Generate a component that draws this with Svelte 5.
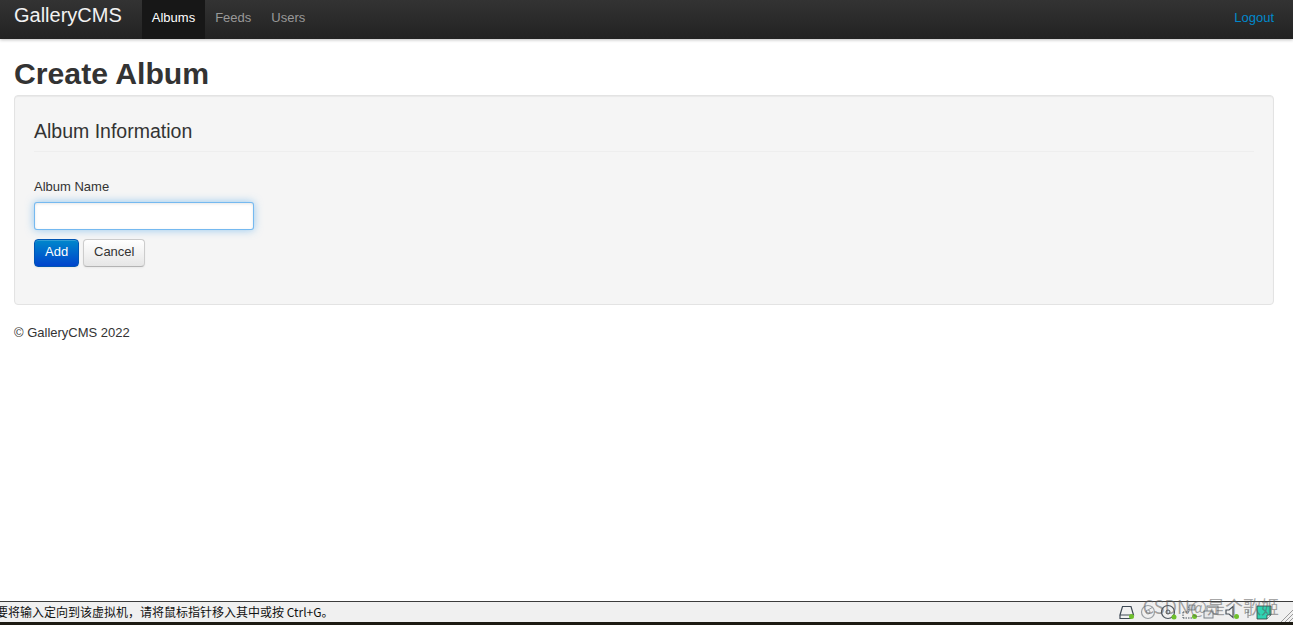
<script>
  let albumName = $state('')
  const navItems = [
    { label: 'Albums', active: true },
    { label: 'Feeds', active: false },
    { label: 'Users', active: false }
  ]
</script>

<div class="page">
  <header class="navbar">
    <a class="brand" href="#top">GalleryCMS</a>
    <nav class="nav">
      {#each navItems as item}
        <a class="nav-link" class:active={item.active} href="#top">{item.label}</a>
      {/each}
    </nav>
    <a class="logout" href="#top">Logout</a>
  </header>

  <main class="container">
    <h1>Create Album</h1>
    <form class="well" onsubmit={(e) => e.preventDefault()}>
      <fieldset>
        <legend>Album Information</legend>
        <label for="album-name">Album Name</label>
        <input id="album-name" type="text" bind:value={albumName} />
        <div class="actions">
          <button class="btn primary" type="submit">Add</button>
          <button class="btn" type="button">Cancel</button>
        </div>
      </fieldset>
    </form>
    <footer>© GalleryCMS 2022</footer>
  </main>

  <div class="vm-bar">
    <div class="hint">要将输入定向到该虚拟机，请将鼠标指针移入其中或按 Ctrl+G。</div>
    <div class="tray">
      <svg width="16" height="16" viewBox="0 0 16 16"><path d="M1 11 L3.5 2.5 H12 L14.5 11 Z M1 11 V14.5 H12" fill="none" stroke="#3f4a55" stroke-width="1.2"/><circle cx="12.5" cy="12.5" r="2.5" fill="#6fc02c"/></svg>
      <svg width="16" height="16" viewBox="0 0 16 16"><circle cx="8" cy="8" r="6.5" fill="none" stroke="#9a9fa3" stroke-width="1.2"/><circle cx="8" cy="8" r="2" fill="none" stroke="#9a9fa3"/><path d="M8 6 L13 3" stroke="#9a9fa3"/></svg>
      <svg width="16" height="16" viewBox="0 0 16 16"><circle cx="7" cy="8" r="6.5" fill="none" stroke="#4b545c" stroke-width="1.2"/><circle cx="7" cy="8" r="2" fill="none" stroke="#4b545c"/><circle cx="13" cy="13" r="2.5" fill="#6fc02c"/></svg>
      <svg width="16" height="16" viewBox="0 0 16 16"><path d="M1 8 H7 V2 H13 M1 14 H11 M1 8 V14" fill="none" stroke="#4b545c" stroke-dasharray="1.5 1"/><rect x="7" y="1" width="6" height="5" fill="#c6ccd2" stroke="#4b545c" stroke-width="0.6"/><circle cx="12.5" cy="12.5" r="2.5" fill="#6fc02c"/></svg>
      <svg width="16" height="16" viewBox="0 0 16 16"><rect x="4" y="2" width="11" height="8" fill="none" stroke="#7b8288"/><rect x="1" y="7" width="9" height="7" fill="#e6e8ea" stroke="#7b8288"/></svg>
      <svg width="16" height="16" viewBox="0 0 16 16"><path d="M2 6 H5 L9 2.5 V13.5 L5 10 H2 Z" fill="none" stroke="#4b545c" stroke-width="1.2"/><circle cx="12.5" cy="12.5" r="2.5" fill="#6fc02c"/></svg>
      <svg width="6" height="16" viewBox="0 0 6 16"><path d="M3 6 V14" stroke="#7b8288"/></svg>
      <svg width="16" height="16" viewBox="0 0 16 16"><path d="M1 2 H15 V11 L11 15 H1 Z" fill="#2fd3b2" stroke="#33403f" stroke-width="0.8"/><path d="M11 15 V11 H15" fill="#e8f4f1" stroke="#33403f" stroke-width="0.8"/></svg>
    </div>
    <svg class="grip" width="14" height="14" viewBox="0 0 14 14"><path d="M14 2 L2 14 M14 6 L6 14 M14 10 L10 14" stroke="#9a9a9a"/></svg>
  </div>
  <div class="vm-strip"></div>
  <span class="watermark">CSDN@是个歌姬</span>
</div>

<style>
  :global(body) {
    background: #fff;
  }
  .page {
    position: relative;
    display: flex;
    flex-direction: column;
    height: 625px;
    overflow: hidden;
    font-family: "Liberation Sans", Arial, sans-serif;
    font-size: 13px;
    line-height: 18px;
    color: #333;
  }
  .navbar {
    display: flex;
    align-items: stretch;
    flex: none;
    height: 39px;
    padding: 0 19px 0 14px;
    background: linear-gradient(#333333, #222222);
    box-shadow: 0 1px 3px rgba(0, 0, 0, 0.25);
  }
  .brand {
    margin-right: 20px;
    padding-top: 5px;
    font-size: 20px;
    line-height: 20px;
    color: #f2f2f2;
    text-decoration: none;
  }
  .nav {
    display: flex;
  }
  .nav-link {
    padding: 9px 10px 0;
    color: #999;
    text-decoration: none;
  }
  .nav-link.active {
    background: #171717;
    color: #fff;
  }
  .logout {
    margin-left: auto;
    padding-top: 9px;
    color: #0088cc;
    text-decoration: none;
  }
  .container {
    flex: 1;
    padding: 0 19px 0 14px;
  }
  h1 {
    margin: 17px 0 3px;
    font-size: 30.2px;
    line-height: 36px;
    font-weight: bold;
    color: #333;
  }
  .well {
    box-sizing: border-box;
    height: 210px;
    padding: 19px;
    background: #f5f5f5;
    border: 1px solid #e3e3e3;
    border-radius: 4px;
    box-shadow: inset 0 1px 1px rgba(0, 0, 0, 0.05);
  }
  fieldset {
    margin: 0;
    padding: 0;
    border: 0;
  }
  legend {
    box-sizing: border-box;
    display: block;
    width: 100%;
    padding: 4px 0 0;
    margin-bottom: 26px;
    height: 37px;
    font-size: 19.5px;
    line-height: 24px;
    color: #333;
    border-bottom: 1px solid #eeeeee;
  }
  label {
    display: block;
    margin-bottom: 6px;
  }
  input {
    display: block;
    box-sizing: border-box;
    width: 220px;
    height: 28px;
    margin: 0 0 9px;
    padding: 4px;
    background: #fff;
    border: 1px solid rgba(82, 168, 236, 0.8);
    border-radius: 3px;
    outline: 0;
    box-shadow: inset 0 1px 3px rgba(0, 0, 0, 0.1), 0 0 8px rgba(82, 168, 236, 0.6);
  }
  .actions {
    display: flex;
    gap: 4px;
  }
  .btn {
    box-sizing: border-box;
    height: 28px;
    padding: 0 10px 4px;
    min-width: 45px;
    width: 62px;
    font-family: inherit;
    font-size: 13px;
    color: #333;
    background: linear-gradient(#ffffff, #e6e6e6);
    border: 1px solid #ccc;
    border-bottom-color: #b3b3b3;
    border-radius: 4px;
    box-shadow: inset 0 1px 0 rgba(255, 255, 255, 0.2), 0 1px 2px rgba(0, 0, 0, 0.05);
  }
  .btn.primary {
    width: 45px;
    color: #fff;
    background: linear-gradient(#0088cc, #0044cc);
    border-color: #0055b3;
  }
  footer {
    margin-top: 19px;
  }
  .vm-bar {
    display: flex;
    align-items: center;
    flex: none;
    box-sizing: border-box;
    height: 21px;
    background: #f0f0f0;
    border-top: 1px solid #3c3c3c;
    font-family: "Noto Sans CJK SC", "Liberation Sans", sans-serif;
    font-size: 12px;
    color: #111;
  }
  .hint {
    flex: 1;
    margin-left: -4px;
    white-space: nowrap;
  }
  .tray {
    display: flex;
    align-items: center;
    gap: 5px;
    margin-right: 7px;
  }
  .grip {
    align-self: flex-end;
  }
  .vm-strip {
    flex: none;
    height: 3px;
    background: #1c1a12;
  }
  .watermark {
    position: absolute;
    right: 14px;
    bottom: 8px;
    font-family: "Noto Sans CJK SC", "Liberation Sans", sans-serif;
    font-size: 18px;
    line-height: 22px;
    color: rgba(90, 90, 90, 0.55);
  }
</style>
